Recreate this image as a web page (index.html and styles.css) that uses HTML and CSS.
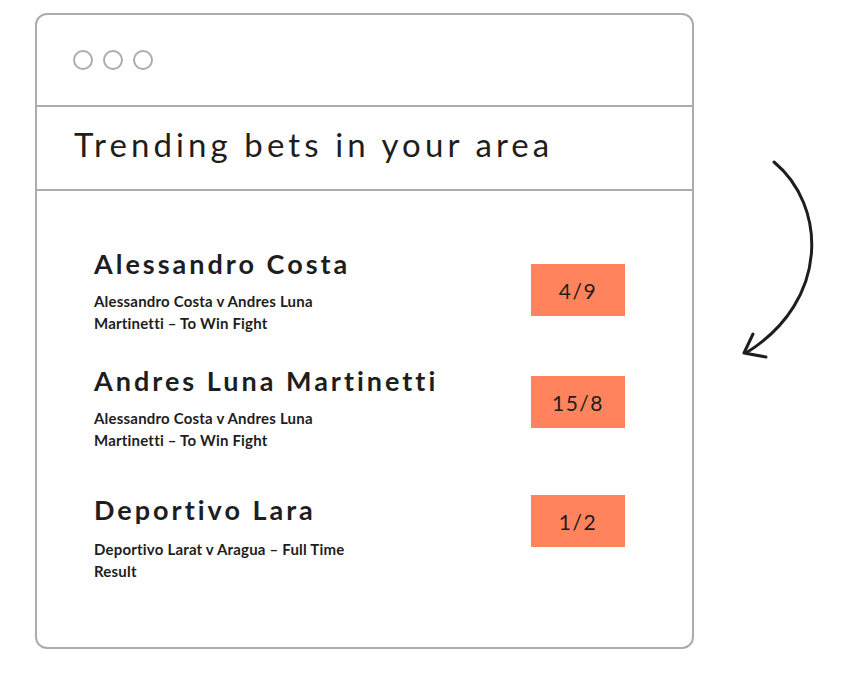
FILE: index.html
```html
<!DOCTYPE html>
<html lang="en">
<head>
    <meta charset="UTF-8">
    <meta name="viewport" content="width=device-width, initial-scale=1.0">
    <title>Trending bets</title>
    <link rel="stylesheet" href="styles.css">
</head>
<body>
    <div class="page">
        <div class="window">
            <div class="bar">
                <span class="dot"></span>
                <span class="dot"></span>
                <span class="dot"></span>
            </div>
            <div class="title-row">
                <h1 class="title">Trending bets in your area</h1>
            </div>
            <div class="list">
                <div class="bet bet-1">
                    <div class="info">
                        <h2 class="name">Alessandro Costa</h2>
                        <p class="market">Alessandro Costa v Andres Luna<br>Martinetti – To Win Fight</p>
                    </div>
                    <div class="odds">4/9</div>
                </div>
                <div class="bet bet-2">
                    <div class="info">
                        <h2 class="name">Andres Luna Martinetti</h2>
                        <p class="market">Alessandro Costa v Andres Luna<br>Martinetti – To Win Fight</p>
                    </div>
                    <div class="odds">15/8</div>
                </div>
                <div class="bet bet-3">
                    <div class="info">
                        <h2 class="name">Deportivo Lara</h2>
                        <p class="market">Deportivo Larat v Aragua – Full Time<br>Result</p>
                    </div>
                    <div class="odds">1/2</div>
                </div>
            </div>
        </div>

        <svg class="arrow" width="100" height="220" viewBox="0 0 100 220" fill="none" stroke="#1e1e1e" stroke-width="3" stroke-linecap="round" stroke-linejoin="round">
            <path d="M43 12 C95 55 100 150 15 203"/>
            <path d="M22 184 L13 203 L35 207"/>
        </svg>
    </div>
</body>
</html>
```

FILE: styles.css
```css
body{
    margin: 0;
    background-color: #fff;
    color: #1e1e1e;
    font-family: Lato, "Open Sans", sans-serif;
}

.page{
    display: flex;
    align-items: flex-start;
    padding: 13px 0 0 35px;
}

.window{
    width: 655px;
    height: 632px;
    border: 2px solid #acacac;
    border-radius: 12px;
}

/* top bar with three dots */
.bar{
    height: 90px;
    display: flex;
    align-items: center;
    gap: 10px;
    padding-left: 36px;
    border-bottom: 2px solid #acacac;
}

.dot{
    width: 16px;
    height: 16px;
    border: 2px solid #acacac;
    border-radius: 50%;
}

.title-row{
    height: 84px;
    display: flex;
    align-items: center;
    padding-left: 37px;
    padding-bottom: 8px;
    box-sizing: border-box;
    border-bottom: 2px solid #acacac;
}

.title{
    margin: 0;
    font-size: 33px;
    font-weight: 400;
    letter-spacing: 4.1px;
}

.list{
    padding: 55px 67px 0 57px;
}

.bet{
    display: flex;
    justify-content: space-between;
    align-items: flex-start;
}

.bet-2{
    margin-top: 29px;
}

.bet-3{
    margin-top: 41px;
}

.name{
    margin: 0;
    font-size: 27px;
    font-weight: 700;
    line-height: 36px;
    letter-spacing: 3px;
}

.market{
    margin: 8px 0 0;
    font-size: 15px;
    font-weight: 700;
    line-height: 22px;
    letter-spacing: 0.2px;
}

.bet-3 .market{
    margin-top: 10px;
}

.odds{
    width: 94px;
    height: 52px;
    margin-top: 18px;
    display: flex;
    align-items: center;
    justify-content: center;
    background-color: #ff845d;
    font-size: 21px;
    letter-spacing: 1.5px;
}

.bet-2 .odds{
    margin-top: 13px;
}

.bet-3 .odds{
    margin-top: 3px;
}

.arrow{
    margin: 137px 0 0 37px;
}
```
